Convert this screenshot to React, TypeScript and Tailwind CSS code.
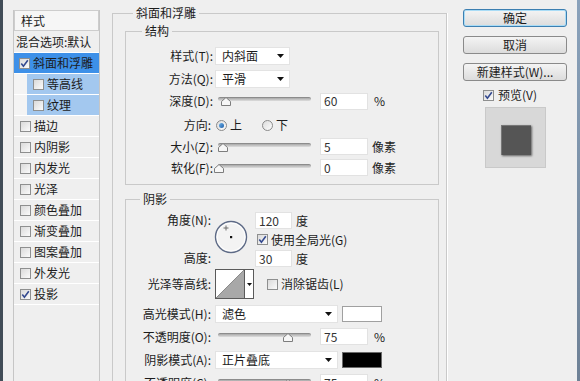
import React from 'react';

const FONT = "font-['Noto_Sans_CJK_SC','Noto_Sans',sans-serif]";

function Check({ checked = false }: { checked?: boolean }) {
  return (
    <span className="flex h-[11px] w-[11px] shrink-0 items-center justify-center border border-[#8e8f8f] bg-gradient-to-br from-[#dadada] to-[#fbfbfb]">
      {checked && (
        <svg width="9" height="9" viewBox="0 0 9 9">
          <path d="M1.3 4.6 L3.4 7.2 L7.8 1.2" fill="none" stroke="#33498f" strokeWidth="1.6" />
        </svg>
      )}
    </span>
  );
}

function Radio({ checked = false }: { checked?: boolean }) {
  return (
    <span className="flex h-[11px] w-[11px] shrink-0 items-center justify-center rounded-full border border-[#8a8a8a] bg-gradient-to-br from-[#dcdcdc] to-[#fcfcfc]">
      {checked && <span className="h-[5px] w-[5px] rounded-full bg-gradient-to-br from-[#6fb3ea] to-[#1e5fa8]" />}
    </span>
  );
}

function Arrow() {
  return (
    <svg width="7" height="4" viewBox="0 0 7 4" className="shrink-0">
      <path d="M0 0 H7 L3.5 4 Z" fill="#111" />
    </svg>
  );
}

function Select({ value, w }: { value: string; w: string }) {
  return (
    <div className={`flex h-[18px] items-center justify-between border border-[#e3e3e3] bg-white pl-[6px] pr-[5px] ${w}`}>
      <span>{value}</span>
      <Arrow />
    </div>
  );
}

function Field({ value }: { value: string }) {
  return (
    <div className="flex h-[17px] w-[48px] shrink-0 items-center border border-[#e2e2e2] bg-white pl-[3px] text-[#333]">
      {value}
    </div>
  );
}

function Slider({ thumb }: { thumb: string }) {
  return (
    <div className="relative h-[16px] w-[93px] shrink-0">
      <div className="absolute left-0 right-0 top-[4px] h-[4px] rounded-[2px] border-t border-[#8c8c8c] bg-gradient-to-b from-[#a9a9a9] to-[#dedede]" />
      <svg width="10" height="9" viewBox="0 0 10 9" className={`absolute top-[4px] ${thumb}`}>
        <path d="M0.5 8.5 V4.5 L5 0.5 L9.5 4.5 V8.5 Z" fill="#f7f7f7" stroke="#7d7d7d" />
      </svg>
    </div>
  );
}

function Label({ children, w = 'w-[87px]' }: { children: React.ReactNode; w?: string }) {
  return <div className={`shrink-0 text-right ${w}`}>{children}</div>;
}

function ListRow({ label, checked, kind }: { label: string; checked?: boolean; kind?: 'sel' | 'sub' }) {
  if (kind === 'sel') {
    return (
      <div className="flex h-[21px] items-center gap-[3px] border-b border-white bg-[#3d90e8] pl-[5px]">
        <Check checked={checked} />
        <span>{label}</span>
      </div>
    );
  }
  if (kind === 'sub') {
    return (
      <div className="flex h-[21px] border-b border-white">
        <div className="w-[13px] bg-[#f4f4f4]" />
        <div className="flex flex-1 items-center gap-[3px] bg-[#a3c8ef] pl-[6px]">
          <Check />
          <span>{label}</span>
        </div>
      </div>
    );
  }
  return (
    <div className="flex h-[21px] items-center gap-[3px] border-b border-white pl-[6px]">
      <Check checked={checked} />
      <span>{label}</span>
    </div>
  );
}

const EFFECTS = ['描边', '内阴影', '内发光', '光泽', '颜色叠加', '渐变叠加', '图案叠加', '外发光'];

function Button({ children, focused, className = '' }: { children: React.ReactNode; focused?: boolean; className?: string }) {
  return (
    <div
      className={`flex h-[18px] items-center justify-center rounded-[3px] border bg-gradient-to-b from-[#f4f4f4] to-[#dcdcdc] ${
        focused ? 'border-[#3c7fb1] shadow-[inset_0_0_0_1px_#a9dcf6]' : 'border-[#8a8a8a]'
      } ${className}`}
    >
      {children}
    </div>
  );
}

export default function App() {
  return (
    <div className={`flex h-[381px] w-[580px] overflow-hidden bg-[#efefef] text-[12px] leading-none text-[#1c1c1c] ${FONT}`}>
      <div className="w-[3px] shrink-0 bg-[#414c57]" />

      {/* effect list */}
      <div className="ml-[10px] mt-[10px] h-[400px] w-[87px] shrink-0 border-x border-[#c6c6c6]">
        <div className="flex h-[21px] items-center border border-[#cdcdcd] bg-[#f6f6f6] pl-[6px]">样式</div>
        <div className="flex h-[22px] items-center border-b border-white pl-[2px]">混合选项:默认</div>
        <ListRow label="斜面和浮雕" checked kind="sel" />
        <ListRow label="等高线" kind="sub" />
        <ListRow label="纹理" kind="sub" />
        {EFFECTS.map((e) => (
          <ListRow key={e} label={e} />
        ))}
        <ListRow label="投影" checked />
      </div>

      {/* main settings */}
      <fieldset className="ml-[12px] mt-[5px] h-[420px] w-[335px] min-w-0 shrink-0 border border-[#c9c9c9] shadow-[1px_0_0_#fff]">
        <legend className="ml-[20px] px-[3px] leading-[16px]">斜面和浮雕</legend>
        <div className="pl-[12px] pr-[7px]">
          <fieldset className="mt-[2px] min-w-0 border border-[#c9c9c9]">
            <legend className="ml-[16px] px-[3px] leading-[16px]">结构</legend>
            <div className="pb-[6px] pt-[6px]">
              <div className="flex h-[22px] items-center">
                <Label>样式(T):</Label>
                <div className="ml-[2px]"><Select value="内斜面" w="w-[75px]" /></div>
              </div>
              <div className="mt-[1px] flex h-[22px] items-center">
                <Label>方法(Q):</Label>
                <div className="ml-[2px]"><Select value="平滑" w="w-[75px]" /></div>
              </div>
              <div className="flex h-[22px] items-center">
                <Label>深度(D):</Label>
                <div className="ml-[5px]"><Slider thumb="left-[3px]" /></div>
                <div className="ml-[9px]"><Field value="60" /></div>
                <span className="ml-[6px]">%</span>
              </div>
              <div className="mt-[2px] flex h-[22px] items-center">
                <Label w="w-[85px]">方向:</Label>
                <div className="ml-[5px] flex items-center gap-[3px]"><Radio checked /><span>上</span></div>
                <div className="ml-[20px] flex items-center gap-[3px]"><Radio /><span>下</span></div>
              </div>
              <div className="flex h-[21px] items-center">
                <Label>大小(Z):</Label>
                <div className="ml-[5px]"><Slider thumb="left-[0px]" /></div>
                <div className="ml-[9px]"><Field value="5" /></div>
                <span className="ml-[4px]">像素</span>
              </div>
              <div className="flex h-[21px] items-center">
                <Label>软化(F):</Label>
                <div className="ml-[5px]"><Slider thumb="left-[-4px]" /></div>
                <div className="ml-[9px]"><Field value="0" /></div>
                <span className="ml-[4px]">像素</span>
              </div>
            </div>
          </fieldset>

          <fieldset className="mt-[6px] h-[300px] min-w-0 border border-[#c9c9c9]">
            <legend className="ml-[14px] px-[3px] leading-[16px]">阴影</legend>
            <div className="pt-[3px]">
              <div className="flex h-[57px]">
                <div className="w-[85px] shrink-0 text-right">
                  <div className="leading-[20px]">角度(N):</div>
                  <div className="mt-[18px] leading-[20px]">高度:</div>
                </div>
                <svg width="34" height="34" viewBox="0 0 34 34" className="ml-[3px] mt-[10px] shrink-0">
                  <circle cx="17" cy="17" r="15.5" fill="#f3f3f3" stroke="#5d6a86" strokeWidth="1.4" />
                  <circle cx="17" cy="17" r="14" fill="none" stroke="#ffffff" strokeWidth="1" />
                  <rect x="16" y="16" width="2.2" height="2.2" fill="#111" />
                  <path d="M12 5.5 V10.5 M9.5 8 H14.5" stroke="#6c6c6c" strokeWidth="1" />
                </svg>
                <div className="ml-[7px]">
                  <div className="mt-[2px] flex items-center">
                    <div className="w-[37px]"><div className="flex h-[17px] items-center border border-[#e2e2e2] bg-white pl-[3px] text-[#333]">120</div></div>
                    <span className="ml-[4px]">度</span>
                  </div>
                  <div className="mt-[3px] flex h-[15px] items-center gap-[3px] pl-[2px]">
                    <Check checked />
                    <span>使用全局光(G)</span>
                  </div>
                  <div className="mt-[3px] flex items-center">
                    <div className="w-[37px]"><div className="flex h-[17px] items-center border border-[#e2e2e2] bg-white pl-[3px] text-[#333]">30</div></div>
                    <span className="ml-[4px]">度</span>
                  </div>
                </div>
              </div>

              <div className="mt-[2px] flex h-[30px] items-center">
                <Label w="w-[85px]">光泽等高线:</Label>
                <div className="ml-[4px] flex">
                  <svg width="30" height="30" viewBox="0 0 30 30">
                    <rect x="0.5" y="0.5" width="29" height="29" fill="#fff" stroke="#5a5a5a" />
                    <path d="M1 29 L29 1 V29 Z" fill="#a8a8a8" />
                    <path d="M1 29 L29 1" stroke="#777" strokeWidth="0.8" />
                  </svg>
                  <div className="flex h-[30px] w-[9px] items-center justify-center border border-l-0 border-[#5a5a5a] bg-white">
                    <svg width="5" height="3" viewBox="0 0 5 3"><path d="M0 0 H5 L2.5 3 Z" fill="#111" /></svg>
                  </div>
                </div>
                <div className="ml-[13px] flex items-center gap-[3px]">
                  <Check />
                  <span>消除锯齿(L)</span>
                </div>
              </div>

              <div className="mt-[3px] flex h-[23px] items-center">
                <Label w="w-[85px]">高光模式(H):</Label>
                <div className="ml-[4px]"><Select value="滤色" w="w-[123px]" /></div>
                <div className="ml-[4px] h-[16px] w-[40px] border border-[#a0a0a0] bg-white" />
              </div>
              <div className="flex h-[23px] items-center">
                <Label w="w-[85px]">不透明度(O):</Label>
                <div className="ml-[7px]"><Slider thumb="left-[65px]" /></div>
                <div className="ml-[9px]"><Field value="75" /></div>
                <span className="ml-[6px]">%</span>
              </div>
              <div className="flex h-[23px] items-center">
                <Label w="w-[85px]">阴影模式(A):</Label>
                <div className="ml-[4px]"><Select value="正片叠底" w="w-[123px]" /></div>
                <div className="ml-[4px] h-[16px] w-[40px] border border-[#6a6a6a] bg-black" />
              </div>
              <div className="flex h-[23px] items-center">
                <Label w="w-[85px]">不透明度(C):</Label>
                <div className="ml-[7px]"><Slider thumb="left-[65px]" /></div>
                <div className="ml-[9px]"><Field value="75" /></div>
                <span className="ml-[6px]">%</span>
              </div>
            </div>
          </fieldset>
        </div>
      </fieldset>

      {/* buttons + preview */}
      <div className="ml-[16px] mt-[9px] flex w-[104px] shrink-0 flex-col">
        <Button focused>确定</Button>
        <Button className="mt-[9px]">取消</Button>
        <Button className="mt-[9px]">新建样式(W)...</Button>
        <div className="mt-[8px] flex h-[12px] items-center gap-[4px] pl-[20px]">
          <Check checked />
          <span>预览(V)</span>
        </div>
        <div className="ml-[22px] mt-[6px] flex h-[61px] w-[61px] items-center justify-center border border-[#c9c9c9] bg-[#d8d8d8] pt-[4px]">
          <div className="h-[30px] w-[30px] border-l border-t border-[#777] bg-[#555555] shadow-[1px_1px_2px_rgba(0,0,0,0.55)]" />
        </div>
      </div>

      <div className="ml-auto w-[3px] shrink-0 bg-gradient-to-b from-[#8aa2bb] to-[#6e8196]" />
    </div>
  );
}
